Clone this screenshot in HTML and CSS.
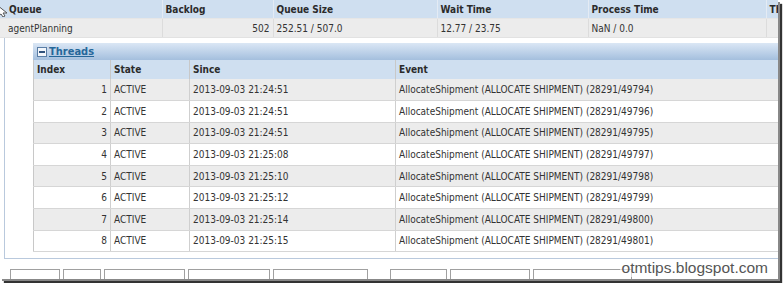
FILE: index.html
```html
<!DOCTYPE html>
<html lang="en">
<head>
  <meta charset="UTF-8">
  <title>Queue Threads</title>
  <link rel="stylesheet" href="styles.css">
</head>
<body>
  <div class="frame">
    <table class="queues">
      <colgroup>
        <col style="width:162px"><col style="width:111px"><col style="width:164px">
        <col style="width:151px"><col style="width:178px"><col style="width:12px">
      </colgroup>
      <thead>
        <tr>
          <th>Queue</th><th>Backlog</th><th>Queue Size</th><th>Wait Time</th><th>Process Time</th><th class="cut">Th</th>
        </tr>
      </thead>
      <tbody>
        <tr class="queue-row">
          <td>agentPlanning</td><td class="num">502</td><td>252.51 / 507.0</td><td>12.77 / 23.75</td><td>NaN / 0.0</td><td></td>
        </tr>
        <tr>
          <td colspan="6" class="detail-cell">
            <div class="detail">
              <div class="threads-bar">
                <svg class="toggle" width="10" height="10" viewBox="0 0 10 10">
                  <rect x="0.5" y="0.5" width="9" height="9" fill="#f2f6fb" stroke="#5a7ea6"/>
                  <rect x="2" y="4" width="6" height="2" fill="#2f527c"/>
                </svg>
                <a href="#" class="threads-link">Threads</a>
              </div>
              <table class="threads">
                <colgroup>
                  <col style="width:77px"><col style="width:79px"><col style="width:206px"><col style="width:400px">
                </colgroup>
                <thead>
                  <tr><th>Index</th><th>State</th><th>Since</th><th>Event</th></tr>
                </thead>
                <tbody>
                  <tr><td class="num">1</td><td>ACTIVE</td><td>2013-09-03 21:24:51</td><td>AllocateShipment (ALLOCATE SHIPMENT) (28291/49794)</td></tr>
                  <tr><td class="num">2</td><td>ACTIVE</td><td>2013-09-03 21:24:51</td><td>AllocateShipment (ALLOCATE SHIPMENT) (28291/49796)</td></tr>
                  <tr><td class="num">3</td><td>ACTIVE</td><td>2013-09-03 21:24:51</td><td>AllocateShipment (ALLOCATE SHIPMENT) (28291/49795)</td></tr>
                  <tr><td class="num">4</td><td>ACTIVE</td><td>2013-09-03 21:25:08</td><td>AllocateShipment (ALLOCATE SHIPMENT) (28291/49797)</td></tr>
                  <tr><td class="num">5</td><td>ACTIVE</td><td>2013-09-03 21:25:10</td><td>AllocateShipment (ALLOCATE SHIPMENT) (28291/49798)</td></tr>
                  <tr><td class="num">6</td><td>ACTIVE</td><td>2013-09-03 21:25:12</td><td>AllocateShipment (ALLOCATE SHIPMENT) (28291/49799)</td></tr>
                  <tr><td class="num">7</td><td>ACTIVE</td><td>2013-09-03 21:25:14</td><td>AllocateShipment (ALLOCATE SHIPMENT) (28291/49800)</td></tr>
                  <tr><td class="num">8</td><td>ACTIVE</td><td>2013-09-03 21:25:15</td><td>AllocateShipment (ALLOCATE SHIPMENT) (28291/49801)</td></tr>
                </tbody>
              </table>
            </div>
          </td>
        </tr>
      </tbody>
    </table>
    <div class="buttons">
      <span class="btn w50"></span>
      <span class="btn w38"></span>
      <span class="btn w81"></span>
      <span class="btn w82"></span>
      <span class="btn w95"></span>
      <span class="btn w57 spaced"></span>
      <span class="btn w80"></span>
      <span class="btn w99"></span>
    </div>
    <svg class="cursor" width="9" height="14" viewBox="0 0 9 14">
      <path d="M-3 2 L7 10 L3 10 L5 13 L3 14 L1 11 L-2 13 Z" fill="#fff" stroke="#555" stroke-width="1"/>
    </svg>
    <div class="watermark">otmtips.blogspot.com</div>
  </div>
</body>
</html>
```

FILE: styles.css
```css
body {
  margin: 0;
  width: 783px;
  height: 283px;
  overflow: hidden;
  background-color: #fff;
  font-family: 'DejaVu Sans Condensed', 'DejaVu Sans', sans-serif;
  font-size: 10px;
  color: #333;
}
.frame {
  position: relative;
  width: 778px;
  height: 279px;
  overflow: hidden;
  background-color: #fff;
  box-shadow: 2px 2px 0 #888, 4px 4px 1px #333;
}
table {
  border-collapse: collapse;
  table-layout: fixed;
}
.queues {
  width: 778px;
}
th {
  background-color: #cfdff0;
  text-align: left;
  font-weight: bold;
  color: #2b2b2b;
  padding: 0 3px;
  border-left: 1px solid #e4ebf4;
  white-space: nowrap;
  overflow: hidden;
}
.queues > thead th {
  height: 18px;
  border-bottom: 1px solid #e6e6e6;
}
.queues > thead th:first-child {
  padding-left: 9px;
  border-left: none;
}
.queues > thead th.cut {
  padding-right: 0;
  text-overflow: clip;
}
.queue-row td {
  height: 18px;
  background-color: #ececec;
  padding: 0 3px;
  border-left: 1px solid #dcdcdc;
  border-bottom: 1px solid #e2e2e2;
  white-space: nowrap;
}
.queue-row td:first-child {
  padding-left: 8px;
  border-left: none;
}
.num {
  text-align: right;
}
.detail-cell {
  padding: 0;
}
.detail {
  margin-left: 4px;
  border-left: 1px solid #b9c9dd;
  border-bottom: 1px solid #b9c9dd;
  padding: 5px 0 6px 28px;
}
.threads-bar {
  height: 17px;
  display: flex;
  align-items: center;
  gap: 2px;
  padding-left: 4px;
  background: linear-gradient(#dbe7f5, #b7cde6 65%, #a4bfdd);
}
.toggle {
  display: block;
}
.threads-link {
  color: #25679a;
  font-weight: bold;
  font-size: 11px;
  text-decoration: underline;
}
.threads {
  width: 762px;
  border-left: 1px solid #c8c8c8;
}
.threads th {
  height: 19px;
  border-left: 1px solid #c8c8c8;
  padding-left: 3px;
}
.threads th:first-child {
  border-left: none;
}
.threads td {
  height: 21.6px;
  padding: 0 3px;
  border-left: 1px solid #cfcfcf;
  border-bottom: 1px solid #d6d6d6;
  white-space: nowrap;
  box-sizing: border-box;
}
.threads td:first-child {
  border-left: none;
}
.threads tbody tr:nth-child(odd) td {
  background-color: #ececec;
}
.buttons {
  display: flex;
  gap: 3px;
  margin-top: 10px;
  padding-left: 10px;
}
.btn {
  display: block;
  height: 12px;
  border: 1px solid #a0a0a0;
  border-bottom: none;
  box-sizing: border-box;
  background-color: #fff;
}
.w50 { width: 50px; }
.w38 { width: 38px; }
.w81 { width: 81px; }
.w82 { width: 82px; }
.w95 { width: 95px; }
.w57 { width: 57px; }
.w80 { width: 80px; }
.w99 { width: 99px; }
.spaced { margin-left: 19px; }
.cursor {
  position: absolute;
  left: 0;
  top: 3px;
}
.watermark {
  position: absolute;
  right: 8px;
  bottom: 2px;
  font-family: 'Liberation Sans', Arial, sans-serif;
  font-size: 15.5px;
  color: #555;
  background-color: rgba(255, 255, 255, 0.6);
  padding: 0 2px;
}
```
